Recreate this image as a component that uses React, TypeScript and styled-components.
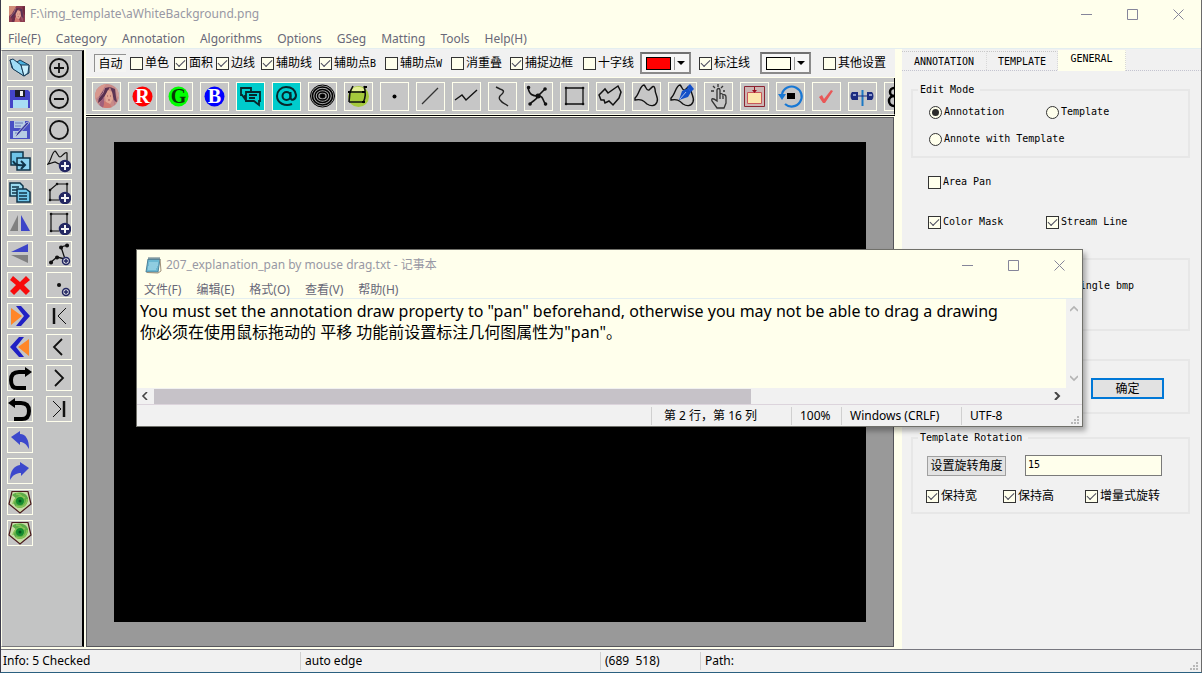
import React from 'react';
import styled, { createGlobalStyle } from 'styled-components';

const ivory = '#ffffec';
const silver = '#c3c4c4';
const panel = '#f1f1f1';
const ui = '"Noto Sans", "Noto Sans CJK SC", sans-serif';
const mono = '"DejaVu Sans Mono", "Noto Sans CJK SC", monospace';

const GlobalStyle = createGlobalStyle`
  *, *::before, *::after { box-sizing: border-box; }
  body { margin: 0; background: ${ivory}; }
  button, input, select, textarea { font: inherit; color: inherit; margin: 0; padding: 0; border-radius: 0; }
  fieldset { min-width: 0; margin: 0; }
`;

const Window = styled.div`
  position: relative;
  display: flex;
  flex-direction: column;
  min-height: 100vh;
  border-left: 1px solid #3c3c4c;
  border-right: 1px solid #6a6a6a;
  border-bottom: 1px solid #2a6080;
  background: ${ivory};
  font: 12px/16px ${ui};
  color: #000;
  overflow: hidden;
`;

const TitleBar = styled.header<{ $inner?: boolean }>`
  display: flex;
  align-items: center;
  height: ${p => (p.$inner ? 30 : 28)}px;
  padding-left: 8px;
  gap: ${p => (p.$inner ? 4 : 5)}px;
  color: #9898a4;
`;

const Title = styled.h1`
  flex: 1;
  margin: 0;
  font-size: 12px;
  font-weight: 400;
  white-space: nowrap;
`;

const ButtonStrip = styled.div`
  display: flex;
`;

const WindowButton = styled.button`
  display: grid;
  place-items: center;
  width: 46px;
  height: 28px;
  border: 0;
  background: none;
  color: #85859a;
`;

const MenuBar = styled.nav<{ $inner?: boolean }>`
  display: flex;
  align-items: center;
  height: ${p => (p.$inner ? 19 : 21)}px;
  padding: 1px 0 0 7px;
  gap: 15px;
  color: #686878;
  border-bottom: 1px solid #e4eef0;
`;

const MenuItem = styled.button`
  border: 0;
  background: none;
  white-space: nowrap;
`;

const Body = styled.div`
  display: flex;
  flex: 1;
`;

const SideBar = styled.aside`
  display: grid;
  grid-template-columns: 26px 26px;
  grid-auto-rows: 26px;
  gap: 5px 13px;
  align-content: start;
  flex: none;
  width: 83px;
  margin: 1px 2px 2px 0;
  padding: 4px 0 0 5px;
  background: ${silver};
  border: solid;
  border-width: 1px 2px 1px 1px;
  border-color: #77777b #000 #77777b ${ivory};
`;

const IconButton = styled.button<{ $large?: boolean; $fill?: string; $column?: number }>`
  display: grid;
  place-items: center;
  flex: none;
  grid-column: ${p => p.$column ?? 'auto'};
  width: ${p => (p.$large ? 29 : 26)}px;
  height: ${p => (p.$large ? 29 : 26)}px;
  border: 1px solid ${ivory};
  background: ${p => p.$fill ?? '#c6c6c6'};
  overflow: hidden;
  svg { display: block; }
`;

const Workspace = styled.main`
  display: flex;
  flex-direction: column;
  flex: 1;
  min-width: 0;
  margin-right: 7px;
`;

const OptionBar = styled.div`
  display: grid;
  flex: none;
  grid-template-columns: 36px 44px 42px 45px 58px 66px 66px 59px 73px 57px 59px 61px 63px 1fr;
  align-items: center;
  height: 29px;
  padding-left: 8px;
  background: ${panel};
  border-bottom: 1px solid ${ivory};
`;

const AutoButton = styled.button`
  justify-self: start;
  width: 32px;
  height: 18px;
  line-height: 14px;
  border: solid;
  border-width: 1px 0 0 1px;
  border-color: #909090;
  background: #f4f4f2;
`;

const Check = styled.label<{ $mono?: boolean }>`
  display: flex;
  align-items: center;
  gap: 2px;
  font-family: ${mono};
  font-size: ${p => (p.$mono ? 10 : 12)}px;
  line-height: 16px;
  white-space: nowrap;
`;

const Suffix = styled.span`
  font-size: 10px;
`;

const Box = styled.input`
  appearance: none;
  display: grid;
  place-items: center;
  flex: none;
  width: 13px;
  height: 13px;
  border: 1px solid #333;
  background: ${ivory};
  &[type='radio'] { border-radius: 50%; }
  &[type='radio']:checked::before {
    content: '';
    width: 7px;
    height: 7px;
    border-radius: 50%;
    background: #2c2c2c;
  }
  &[type='checkbox']:checked::before {
    content: '';
    width: 9px;
    height: 5px;
    border: solid #4a4a5c;
    border-width: 0 0 1px 1px;
    transform: rotate(-45deg) translate(1px, -1px);
  }
`;

const Combo = styled.label`
  position: relative;
  display: flex;
  align-items: center;
  justify-self: start;
  width: 51px;
  height: 22px;
  padding-left: 4px;
  gap: 3px;
  border: 2px solid #8a8a8a;
  border-top-color: #707070;
  background: #f6f6f6;
`;

const Swatch = styled.span<{ $color: string }>`
  width: 25px;
  height: 13px;
  border: 1px solid #000;
  background: ${p => p.$color};
`;

const Arrow = styled.span`
  display: grid;
  place-items: center;
  width: 13px;
  height: 13px;
  border-left: 1px solid #999;
  &::before {
    content: '';
    border: 4px solid transparent;
    border-top-color: #000;
    border-bottom: 0;
  }
`;

const HiddenSelect = styled.select`
  position: absolute;
  inset: 0;
  width: 100%;
  opacity: 0;
`;

const ToolBar = styled.div`
  display: flex;
  flex: none;
  align-items: center;
  gap: 7px;
  height: 37px;
  padding: 0 0 0 6px;
  background: ${silver};
  border-right: 1px solid #000;
  border-bottom: 1px solid ${ivory};
  overflow: hidden;
`;

const StageFrame = styled.div`
  display: flex;
  flex: 1;
  border-top: 1px solid #000;
`;

const Stage = styled.div`
  display: flex;
  flex: 1;
  margin: 1px 1px 2px 0;
  padding: 24px 27px 24px 27px;
  background: #999;
  border: 1px solid #55555a;
  outline: 1px solid ${ivory};
`;

const Canvas = styled.div`
  flex: 1;
  background: #000;
`;

const Settings = styled.aside`
  display: flex;
  flex-direction: column;
  flex: none;
  width: 299px;
  padding-top: 1px;
  background: ${panel};
  font: 10px/14px ${mono};
`;

const Tabs = styled.div`
  display: flex;
  align-items: center;
  height: 21px;
  border-bottom: 1px dotted #c4c4d0;
`;

const Tab = styled.button<{ $width: number; $active?: boolean }>`
  width: ${p => p.$width}px;
  height: ${p => (p.$active ? 21 : 19)}px;
  border: 0;
  border-top: 1px dotted ${p => (p.$active ? ivory : '#c8c8c8')};
  border-right: 1px dotted #d8d8d8;
  background: ${p => (p.$active ? ivory : 'transparent')};
  padding: ${p => (p.$active ? '0 0 3px' : '2px 0 0')};
`;

const Group = styled.fieldset<{ $height: number }>`
  height: ${p => p.$height}px;
  margin: 0 11px 0 9px;
  padding: 0 0 0 13px;
  border: 2px solid #e7e7e7;
`;

const Legend = styled.legend`
  margin-left: -8px;
  padding: 0 6px 0 2px;
`;

const Options = styled.div<{ $columns: string; $top: number; $left?: number }>`
  display: grid;
  grid-template-columns: ${p => p.$columns};
  align-items: center;
  row-gap: 11px;
  padding: ${p => p.$top}px 0 0 ${p => p.$left ?? 0}px;
`;

const Wide = styled.div`
  grid-column: 1 / -1;
`;

const Spacer = styled.div<{ $height: number }>`
  flex: none;
  height: ${p => p.$height}px;
`;

const PartLabel = styled.span`
  display: block;
  padding: 19px 54px 0 0;
  text-align: right;
`;

const ConfirmRow = styled.div`
  display: flex;
  justify-content: flex-end;
  padding: 17px 24px 0 0;
`;

const PushButton = styled.button<{ $primary?: boolean }>`
  width: ${p => (p.$primary ? 73 : 79)}px;
  height: ${p => (p.$primary ? 21 : 20)}px;
  border: ${p => (p.$primary ? '2px solid #0078d7' : '1px solid #a0a0a0')};
  background: #e2e2e2;
  font-size: 12px;
  line-height: 16px;
  white-space: nowrap;
`;

const AngleInput = styled.input`
  width: 137px;
  height: 21px;
  padding: 0 2px 2px;
  border: 1px solid #7a7a7a;
  background: ${ivory};
`;

const StatusBar = styled.footer<{ $columns: string; $inner?: boolean }>`
  display: grid;
  grid-template-columns: ${p => p.$columns};
  align-items: center;
  height: ${p => (p.$inner ? 22 : 23)}px;
  border-top: 1px solid ${p => (p.$inner ? '#dcd4dc' : '#77777f')};
  background: ${panel};
`;

const StatusCell = styled.span<{ $pad: number }>`
  padding-left: ${p => p.$pad}px;
  height: 18px;
  border-right: 1px solid #d0d0d0;
  line-height: 18px;
  white-space: pre;
  &:last-of-type { border-right: 0; }
`;

const Grip = styled.svg`
  position: absolute;
  right: 2px;
  bottom: 1px;
`;

const Notepad = styled.section`
  position: absolute;
  left: 135px;
  top: 249px;
  width: 947px;
  display: flex;
  flex-direction: column;
  background: ${ivory};
  border: 1px solid #70706a;
  box-shadow: 3px 4px 5px rgba(0, 0, 0, 0.3);
`;

const Editor = styled.div`
  display: grid;
  grid-template-columns: 1fr 16px;
  grid-template-rows: 89px 16px;
`;

const TextArea = styled.textarea`
  display: block;
  width: 100%;
  height: 100%;
  padding: 2px 3px;
  border: 0;
  outline: 0;
  resize: none;
  overflow: hidden;
  white-space: pre;
  background: ${ivory};
  font: 16px/21px "Noto Sans", "Noto Sans CJK SC", sans-serif;
`;

const Rail = styled.div<{ $vertical?: boolean }>`
  display: flex;
  flex-direction: ${p => (p.$vertical ? 'column' : 'row')};
  justify-content: space-between;
  align-items: center;
  grid-column: ${p => (p.$vertical ? 'auto' : '1 / -1')};
  padding: ${p => (p.$vertical ? '6px 0' : '0 21px 0 4px')};
  background: ${panel};
  color: ${p => (p.$vertical ? '#b4b4b4' : '#444')};
`;

const Thumb = styled.span`
  flex: none;
  width: 597px;
  height: 15px;
  margin: 0 auto 0 5px;
  background: #c6c2c8;
`;

const Chevron = ({ d, w = 1.6 }: { d: string; w?: number }) => (
  <svg width="8" height="8" viewBox="0 0 8 8" fill="none" stroke="currentColor" strokeWidth={w}>
    <path d={d} />
  </svg>
);

const WindowButtons = () => (
  <ButtonStrip>
    <WindowButton aria-label="Minimize">
      <svg width="11" height="11" stroke="currentColor"><path d="M0 5.5H11" /></svg>
    </WindowButton>
    <WindowButton aria-label="Maximize">
      <svg width="11" height="11" stroke="currentColor" fill="none"><path d="M.5 .5H10.500V10.500H.5z" /></svg>
    </WindowButton>
    <WindowButton aria-label="Close">
      <svg width="11" height="11" stroke="currentColor"><path d="M.5 .5L10.500 10.500M10.500 .5L.5 10.500" /></svg>
    </WindowButton>
  </ButtonStrip>
);

const SizeGrip = () => (
  <Grip width="10" height="10" viewBox="0 0 10 10" fill="#b8b8b8">
    <path d="M7 1h2v2h-2zM4 4h2v2h-2zM7 4h2v2h-2zM1 7h2v2h-2zM4 7h2v2h-2zM7 7h2v2h-2z" />
  </Grip>
);

const Portrait = ({ size, round }: { size: number; round?: boolean }) => (
  <svg width={size} height={size} viewBox="0 0 24 24">
    <clipPath id={round ? 'face-round' : 'face-square'}>
      {round ? <circle cx="12" cy="12" r="12" /> : <rect width="24" height="24" />}
    </clipPath>
    <g clipPath={`url(#${round ? 'face-round' : 'face-square'})`}>
      <rect width="24" height="24" fill={round ? '#c88a88' : '#8c3c50'} />
      <path d="M0 0H11L7 7L4 12L0 15z" fill={round ? '#d8988e' : '#d08c78'} />
      <path d="M4 13L10 4L15 3L11 10L7 16L3 19z" fill="#583050" />
      <path d="M15 3L20 5L21 13L22 18L19 17L17 8z" fill="#5c3454" />
      <path d="M13 6L17 8L18 15L15 20L11 19L10 12z" fill="#e2a694" />
      <path d="M9 17L15 20L17 24H7z" fill="#d07870" />
      <path d="M5 18L9 13L9 20L8 24H4z" fill={round ? '#a0607c' : '#6a2c48'} />
      <path d="M12 12h1M15 12h1M13 16h2" stroke="#9c5458" />
      <path d="M2 16L8 9L10 3M19 16L20 22" stroke="#b47c8c" fill="none" />
      <path d="M20 1L24 0V14L22 12z" fill={round ? '#d0a09c' : '#6e2a40'} />
    </g>
  </svg>
);

const Badge = ({ x = 18, y = 18, r = 5 }: { x?: number; y?: number; r?: number }) => (
  <g stroke="#242862" fill="none">
    <circle cx={x} cy={y} r={r - 0.5} fill={r > 4 ? '#242862' : '#d4d4dc'} strokeWidth="1.500" />
    <path
      d={`M${x - r + 2} ${y}H${x + r - 2}M${x} ${y - r + 2}V${y + r - 2}`}
      stroke={r > 4 ? '#f4f4f4' : '#242862'}
      strokeWidth={r > 4 ? 2 : 1.5}
    />
  </g>
);

const Swirl = () => (
  <>
    <path d="M4 1.500H20L23 14L12 23L1 14z" fill="#c8dca8" stroke="#4a1a1c" strokeWidth="1.200" />
    <path d="M4 5C9 1 18 2 20 8C20 14 17 18 11 18C5 17 4 10 9 7C14 5 17 9 15 13C12 16 8 13 10 10" fill="#5cac48" />
    <path d="M5 14C6 8 12 5 17 8M19 9C19 15 13 19 8 16M8 4C14 4 17 9 15 14" fill="none" stroke="#88c457" strokeWidth="1.500" />
    <circle cx="12" cy="11" r="4" fill="#148c2e" />
    <circle cx="12" cy="11" r="1.500" fill="#04551e" />
  </>
);

const sideIcons: Record<string, React.ReactNode> = {
  Open: (
    <g stroke="#183c58" strokeLinejoin="round">
      <path d="M2 4L9 6L12 4L21 9V17L16 20L4 12z" fill="#4bb1de" />
      <path d="M2 4L5 3L13 9L16 20L5 13z" fill="#9fdcf5" />
      <path d="M13 9L21 9L20 17L16 20z" fill="#c8eefb" />
    </g>
  ),
  Save: (
    <>
      <path d="M2 3H20L22 5V21H2z" fill="#4444c8" />
      <path d="M7 3H17V10H7z" fill="#1c1c28" />
      <path d="M12 4H15V9H12z" fill="#f0f0f0" />
      <path d="M5 13H20V21H5z" fill="#a8dcf4" />
    </>
  ),
  'Save as': (
    <>
      <path d="M2 3H20L22 5V21H2z" fill="#4850c4" />
      <path d="M6 3H17V10H6zM5 13H19V20H5z" fill="#b5cce4" />
      <path d="M7 5h8M7 8h6M7 15h5" stroke="#6878b8" />
      <path d="M21 5L10 17L7 20L9 15L19 4z" fill="#3438a0" stroke="#d4d8e4" strokeWidth=".7" />
    </>
  ),
  'Copy to': (
    <g stroke="#10354a" strokeWidth="1.500">
      <path d="M3 3H15V16H3z" fill="#6fc4e8" />
      <path d="M9 9H22V21H9z" fill="#8cd4f2" />
      <path d="M5 12C7 16 10 17 16 16M13 12L17 16L13 20" fill="none" strokeWidth="2" />
    </g>
  ),
  Copy: (
    <g stroke="#10354a" strokeWidth="1.500">
      <path d="M2 3H12L15 6V16H2z" fill="#9bdaf0" />
      <path d="M4 7h7M4 10h5M4 13h5" />
      <path d="M9 9H18L22 12V22H9z" fill="#70c7ec" />
      <path d="M11 13h8M11 16h8M11 19h8" />
    </g>
  ),
  'Flip horizontal': (
    <>
      <path d="M10 4V20H2z" fill="#808080" />
      <path d="M13 4V20H22z" fill="#3c44c8" />
    </>
  ),
  'Flip vertical': (
    <>
      <path d="M3 10L20 2V10z" fill="#3c44c8" />
      <path d="M3 13H20V21z" fill="#808080" />
    </>
  ),
  Delete: <path d="M5 3L12 9L18 3L22 7L16 12L22 18L18 22L12 16L6 22L2 18L8 12L2 7z" fill="#f80c0c" />,
  Forward: (
    <>
      <path d="M3 4L14 12L3 21z" fill="#ff8628" />
      <path d="M8 2H13L22 12L13 22H8L16 12z" fill="#2020c4" />
    </>
  ),
  Backward: (
    <>
      <path d="M21 4L10 12L21 21z" fill="#ff8628" />
      <path d="M16 2H11L2 12L11 22H16L8 12z" fill="#2020c4" />
    </>
  ),
  Redo: (
    <>
      <path d="M18 22H9C5 22 3 19 3 14C3 8 6 6 11 6H19" fill="none" stroke="#000" strokeWidth="4" />
      <path d="M17 1L24 6L17 11z" />
    </>
  ),
  Undo: (
    <>
      <path d="M6 22H14C19 22 21 19 21 14C21 8 18 6 13 6H5" fill="none" stroke="#000" strokeWidth="4" />
      <path d="M7 1L0 6L7 11z" />
    </>
  ),
  'Step back': <path d="M3 9L12 3V6C18 6 21 12 21 21C18 16 16 14 12 14V17z" fill="#3c48cc" />,
  'Step forward': <path d="M21 9L12 3V6C6 7 2 12 2 21C5 16 8 14 13 14V17z" fill="#3c48cc" />,
  'Swirl A': <Swirl />,
  'Swirl B': <Swirl />,
};

const viewIcons: Record<string, React.ReactNode> = {
  'Zoom in': <path d="M12 3A9 9 0 1 0 12 21A9 9 0 1 0 12 3M7 12H17M12 7V17" />,
  'Zoom out': <path d="M12 3A9 9 0 1 0 12 21A9 9 0 1 0 12 3M7 12H17" />,
  Circle: <path d="M12 3A9 9 0 1 0 12 21A9 9 0 1 0 12 3" />,
  'Add curve': (
    <>
      <path d="M12 15L8 13L1 15C4 12 5 3 8 2C10 3 11 8 13 8C15 8 18 2 20 4V12" strokeWidth="1.200" />
      <Badge x={18} y={17} r={6} />
    </>
  ),
  'Add polygon': (
    <>
      <path d="M12 20H3V10L10 4H20V13" strokeWidth="1.200" />
      <path d="M3 10h.1M10 4h.1M20 4h.1M3 20h.1" strokeWidth="2.500" strokeLinecap="round" />
      <Badge x={18} y={18} r={6} />
    </>
  ),
  'Add rectangle': (
    <>
      <path d="M12 20H4V3H20V13" strokeWidth="1.200" />
      <path d="M4 3h.1M20 3h.1M4 20h.1" strokeWidth="2.500" strokeLinecap="round" />
      <Badge x={18} y={18} r={6} />
    </>
  ),
  'Add polyline': (
    <>
      <path d="M3 21L10 15L18 17L14 5L21 3" strokeWidth="1.300" />
      <path d="M4 20.500h.1M10 15.500h.1M14 5.500h.1M20 3.500h.1" strokeWidth="4" strokeLinecap="round" />
      <Badge x={19} y={19} r={4} />
    </>
  ),
  'Add point': (
    <>
      <path d="M12 12h.1" strokeWidth="4" strokeLinecap="round" />
      <Badge x={19} y={19} r={4} />
    </>
  ),
  First: <><path d="M7 4V20" strokeWidth="2.500" /><path d="M19 4L11 12L19 20" strokeWidth="1" /></>,
  Previous: <path d="M15 4L7 12L15 20" />,
  Next: <path d="M8 4L16 12L8 20" />,
  Last: <><path d="M17 4V20" strokeWidth="2.500" /><path d="M6 4L14 12L6 20" strokeWidth="1" /></>,
};

const Letter = ({ children, fill, color }: { children: string; fill: string; color: string }) => (
  <>
    <circle cx="13.500" cy="13.500" r="10" fill={fill} />
    <text x="13.500" y="20" textAnchor="middle" fontFamily="Liberation Serif, serif" fontSize="20" fontWeight="700" fill={color}>
      {children}
    </text>
  </>
);

const blob = 'M2 15C6 12 7 2 11 2C13 3 13 8 16 7C20 3 21 2 22 6C22 12 26 15 24 19C22 24 17 23 14 21C10 17 8 16 2 17z';

const tools: { name: string; fill?: string; art: React.ReactNode }[] = [
  { name: 'Portrait', art: null },
  { name: 'Red channel', art: <Letter fill="#ff0000" color="#fff">R</Letter> },
  { name: 'Green channel', art: <Letter fill="#00ff00" color="#083808">G</Letter> },
  { name: 'Blue channel', art: <Letter fill="#0000ff" color="#fff">B</Letter> },
  {
    name: 'Comments',
    fill: '#00cccc',
    art: (
      <g fill="none" stroke="#06282c" strokeWidth="1.800">
        <path d="M9 13H8V16L5 12H4V5H14V8" />
        <path d="M9 9H23V18H22V22L17 18H9zM12 12h8M12 15h6" />
      </g>
    ),
  },
  {
    name: 'Mention',
    fill: '#00cccc',
    art: (
      <g fill="none" stroke="#06282c" strokeWidth="2">
        <circle cx="13.500" cy="13" r="4" />
        <path d="M17.500 9V15C18 18 23 17 23 12C22 6 18 4 13 4C8 4 4 8 4 13C4 20 12 24 19 21" />
      </g>
    ),
  },
  {
    name: 'Rings',
    art: (
      <g fill="none" stroke="#000">
        <ellipse cx="13.500" cy="13" rx="12" ry="11" fill="#aaa" />
        <ellipse cx="13.500" cy="13" rx="10" ry="9" strokeWidth="1.500" />
        <ellipse cx="13.500" cy="13" rx="7.500" ry="6.500" strokeWidth="1.500" />
        <ellipse cx="13.500" cy="13" rx="5" ry="4" strokeWidth="1.500" />
        <ellipse cx="13.500" cy="13" rx="2.500" ry="2" fill="#000" />
      </g>
    ),
  },
  {
    name: 'Ball',
    art: (
      <>
        <circle cx="13.500" cy="13.500" r="10.500" fill="#a5c93c" />
        <path d="M7 6C10 3 17 3 20 7L19 8H7z" fill="#e3ef96" />
        <path d="M3 9H19M4 19H20M19 3C21 9 21 14 18 20M8 3L5 9L4 19" fill="none" stroke="#111" strokeWidth="1.600" />
        <path d="M17 8h3v2h-3zM17 18h3v2h-3zM3 8h3v2H3zM19 3h3v2h-3z" />
      </>
    ),
  },
  { name: 'Point', art: <circle cx="13.500" cy="13.500" r="2" /> },
  { name: 'Line', art: <path d="M5 21L21 5" fill="none" stroke="#333" strokeWidth="1.300" /> },
  { name: 'Polyline', art: <path d="M2 17L9 12L13 17L24 7" fill="none" stroke="#111" strokeWidth="1.400" /> },
  { name: 'Curve', art: <path d="M7 4L11 6C14 7 16 8 13 11C9 14 10 16 12 18C14 21 16 20 19 23" fill="none" stroke="#222" strokeWidth="1.400" /> },
  {
    name: 'Spline',
    art: (
      <g fill="none" stroke="#111" strokeWidth="1.600">
        <path d="M3 4C4 12 8 13 13 13C19 13 17 17 21 22M20 6L13 13C11 18 8 17 5 21" />
        <path d="M3.500 4.500h.1M20 6h.1M5 21h.1M20.500 21h.1" strokeWidth="3.500" strokeLinecap="round" />
        <path d="M13 13h.1" strokeWidth="5" strokeLinecap="round" />
      </g>
    ),
  },
  {
    name: 'Rectangle',
    art: (
      <g fill="none" stroke="#111">
        <path d="M5 5H22V21H5z" strokeWidth="1.300" />
        <path d="M5 5h.1M22 5h.1M22 21h.1M5 21h.1" strokeWidth="2.500" strokeLinecap="round" />
      </g>
    ),
  },
  { name: 'Polygon', art: <path d="M2 12L8 6L11 10L21 3L24 9L22 15L16 22L12 18L8 20L7 17L4 17z" fill="none" stroke="#111" strokeWidth="1.500" /> },
  { name: 'Closed curve', art: <path d={blob} fill="none" stroke="#111" strokeWidth="1.400" /> },
  {
    name: 'Pen curve',
    art: (
      <>
        <path d={blob} fill="none" stroke="#111" strokeWidth="1.400" />
        <path d="M10 17L13 8L19 5L22 9L19 14z" fill="#1450c8" />
        <path d="M18 4L21 1L25 6L22 9z" fill="#1450c8" />
        <path d="M11 16L17 9" stroke="#d0d8f0" strokeWidth=".8" />
      </>
    ),
  },
  {
    name: 'Touch',
    art: (
      <g fill="none" stroke="#333" strokeWidth="1.300">
        <path d="M12 14V7C12 5 15 5 15 7V13V11C16 10 18 11 18 12C19 11 21 12 21 14V20L19 25H12L7 18C6 15 8 15 12 18z" />
        <path d="M15 13V16M18 13V16M13 1V4M6 8H9M18 8H20M8 3L10 5M18 3L16 5" />
      </g>
    ),
  },
  {
    name: 'Import',
    art: (
      <>
        <path d="M3.500 3.500H23.500V23.500H3.500z" fill="#cdb6b4" stroke="#8c2430" />
        <path d="M6.500 9.500H20.500V20.500H6.500z" fill="#fce6ac" stroke="#c8585c" />
        <path d="M13 4h1v3h2l-2.500 3L11 7h2z" fill="#980c1c" />
      </>
    ),
  },
  {
    name: 'Rotate',
    art: (
      <>
        <path d="M5 11A10 10 0 1 1 8 21" fill="none" stroke="#1878d4" strokeWidth="2.200" />
        <path d="M1 11H9L5 17z" fill="#1878d4" />
        <path d="M10 10h8v6h-8z" />
      </>
    ),
  },
  { name: 'Accept', art: <path d="M6 14L9 12L11 16L18 7L20 8L12 20H10z" fill="#e85858" /> },
  {
    name: 'Mirror',
    art: (
      <>
        <path d="M13.500 7V23" stroke="#1c78c4" strokeWidth="2" />
        <path d="M9 9V17H3C1 15 1 11 3 9zM18 9V17H23C25 15 25 11 23 9z" fill="#1c2c80" />
        <path d="M4 12h3M20 12h3" stroke="#8c98cc" strokeWidth="2" />
        <path d="M9 13h9" stroke="#1c2c80" />
      </>
    ),
  },
  {
    name: 'Link',
    art: (
      <g fill="none" stroke="#000" strokeWidth="2.500">
        <circle cx="9" cy="9" r="4" />
        <circle cx="9" cy="18" r="5" />
      </g>
    ),
  },
];

type Opt = { label: string; on?: boolean; suffix?: string };

const CheckOption = ({ label, on, suffix, mono: isMono }: Opt & { mono?: boolean }) => (
  <Check $mono={isMono}>
    <Box type="checkbox" defaultChecked={on} />
    <span>{label}{suffix && <Suffix>{suffix}</Suffix>}</span>
  </Check>
);

const options: Opt[] = [
  { label: '单色' },
  { label: '面积', on: true },
  { label: '边线', on: true },
  { label: '辅助线', on: true },
  { label: '辅助点', suffix: 'B', on: true },
  { label: '辅助点', suffix: 'W' },
  { label: '消重叠' },
  { label: '捕捉边框', on: true },
  { label: '十字线' },
];

const ColorCombo = ({ name, color }: { name: string; color: string }) => (
  <Combo>
    <Swatch $color={color} />
    <Arrow />
    <HiddenSelect aria-label={name} defaultValue={color}>
      <option value={color} />
    </HiddenSelect>
  </Combo>
);

const menus = ['File(F)', 'Category', 'Annotation', 'Algorithms', 'Options', 'GSeg', 'Matting', 'Tools', 'Help(H)'];
const noteMenus = ['文件(F)', '编辑(E)', '格式(O)', '查看(V)', '帮助(H)'];
const note =
  'You must set the annotation draw property to "pan" beforehand, otherwise you may not be able to drag a drawing\n' +
  '你必须在使用鼠标拖动的 平移 功能前设置标注几何图属性为"pan"。';

const viewNames = Object.keys(viewIcons);

export default function App() {
  return (
    <>
      <GlobalStyle />
      <Window>
        <TitleBar>
          <Portrait size={16} />
          <Title>F:\img_template\aWhiteBackground.png</Title>
          <WindowButtons />
        </TitleBar>
        <MenuBar>{menus.map(m => <MenuItem key={m}>{m}</MenuItem>)}</MenuBar>

        <Body>
          <SideBar>
            {Object.keys(sideIcons).map((name, i) => (
              <React.Fragment key={name}>
                <IconButton aria-label={name} $column={1}>
                  <svg width="24" height="24" viewBox="0 0 24 24">{sideIcons[name]}</svg>
                </IconButton>
                {viewNames[i] && (
                  <IconButton aria-label={viewNames[i]} $column={2}>
                    <svg width="24" height="24" viewBox="0 0 24 24" fill="none" stroke="#111" strokeWidth="1.800">
                      {viewIcons[viewNames[i]]}
                    </svg>
                  </IconButton>
                )}
              </React.Fragment>
            ))}
          </SideBar>

          <Workspace>
            <OptionBar>
              <AutoButton>自动</AutoButton>
              {options.map(o => <CheckOption key={o.label + (o.suffix ?? '')} {...o} />)}
              <ColorCombo name="十字线" color="#ff0000" />
              <CheckOption label="标注线" on />
              <ColorCombo name="标注线" color={ivory} />
              <CheckOption label="其他设置" />
            </OptionBar>
            <ToolBar>
              {tools.map(t => (
                <IconButton key={t.name} aria-label={t.name} $large $fill={t.fill}>
                  {t.art ? <svg width="27" height="27" viewBox="0 0 27 27">{t.art}</svg> : <Portrait size={24} round />}
                </IconButton>
              ))}
            </ToolBar>
            <StageFrame>
              <Stage><Canvas /></Stage>
            </StageFrame>
          </Workspace>

          <Settings>
            <Tabs>
              <Tab $width={85}>ANNOTATION</Tab>
              <Tab $width={71}>TEMPLATE</Tab>
              <Tab $width={68} $active>GENERAL</Tab>
            </Tabs>
            <Spacer $height={12} />
            <Group $height={75}>
              <Legend>Edit Mode</Legend>
              <Options $columns="117px 1fr" $top={7} $left={3}>
                <Check $mono><Box type="radio" name="mode" defaultChecked />Annotation</Check>
                <Check $mono><Box type="radio" name="mode" />Template</Check>
                <Wide><Check $mono><Box type="radio" name="mode" />Annote with Template</Check></Wide>
              </Options>
            </Group>
            <Options $columns="118px 1fr" $top={16} $left={26}>
              <CheckOption label="Area Pan" mono />
            </Options>
            <Options $columns="118px 1fr" $top={24} $left={26}>
              <CheckOption label="Color Mask" on mono />
              <CheckOption label="Stream Line" on mono />
            </Options>
            <Spacer $height={28} />
            <Group $height={73}><PartLabel>Single bmp</PartLabel></Group>
            <Spacer $height={28} />
            <Group $height={55}>
              <ConfirmRow><PushButton $primary>确定</PushButton></ConfirmRow>
            </Group>
            <Spacer $height={17} />
            <Group $height={83}>
              <Legend>Template Rotation</Legend>
              <Options $columns="98px 1fr" $top={10} $left={1}>
                <PushButton>设置旋转角度</PushButton>
                <AngleInput aria-label="设置旋转角度" defaultValue="15" />
              </Options>
              <Options $columns="77px 82px 1fr" $top={12}>
                <CheckOption label="保持宽" on />
                <CheckOption label="保持高" on />
                <CheckOption label="增量式旋转" on />
              </Options>
            </Group>
          </Settings>
        </Body>

        <StatusBar $columns="300px 300px 100px 1fr">
          <StatusCell $pad={2}>Info: 5 Checked</StatusCell>
          <StatusCell $pad={4}>auto edge</StatusCell>
          <StatusCell $pad={4}>{'(689  518)'}</StatusCell>
          <StatusCell $pad={4}>Path:</StatusCell>
        </StatusBar>
        <SizeGrip />

        <Notepad>
          <TitleBar $inner>
            <svg width="17" height="18" viewBox="0 0 17 18">
              <path d="M3 3H15L13 16H1z" fill="#6bb8d2" stroke="#4c8098" />
              <path d="M15 3L16 15L13 17L2 16.500" fill="none" stroke="#a09078" />
              <path d="M4 1v3M6 1v3M8 1v3M10 1v3M12 1v3M14 1v3" stroke="#557080" />
              <path d="M4 7h9M4 9h9M3 11h9M3 13h8" stroke="#b5e2ef" />
            </svg>
            <Title>207_explanation_pan by mouse drag.txt - 记事本</Title>
            <WindowButtons />
          </TitleBar>
          <MenuBar $inner>{noteMenus.map(m => <MenuItem key={m}>{m}</MenuItem>)}</MenuBar>
          <Editor>
            <TextArea aria-label="Text" spellCheck={false} defaultValue={note} />
            <Rail $vertical>
              <Chevron d="M0 6L4 2L8 6" />
              <Chevron d="M0 2L4 6L8 2" />
            </Rail>
            <Rail>
              <Chevron d="M6 0L2 4L6 8" />
              <Thumb />
              <Chevron d="M2 0L6 4L2 8" w={2} />
            </Rail>
          </Editor>
          <StatusBar $inner $columns="515px 140px 50px 120px 1fr">
            <StatusCell $pad={0} />
            <StatusCell $pad={12}>第 2 行，第 16 列</StatusCell>
            <StatusCell $pad={8}>100%</StatusCell>
            <StatusCell $pad={8}>Windows (CRLF)</StatusCell>
            <StatusCell $pad={8}>UTF-8</StatusCell>
          </StatusBar>
          <SizeGrip />
        </Notepad>
      </Window>
    </>
  );
}
